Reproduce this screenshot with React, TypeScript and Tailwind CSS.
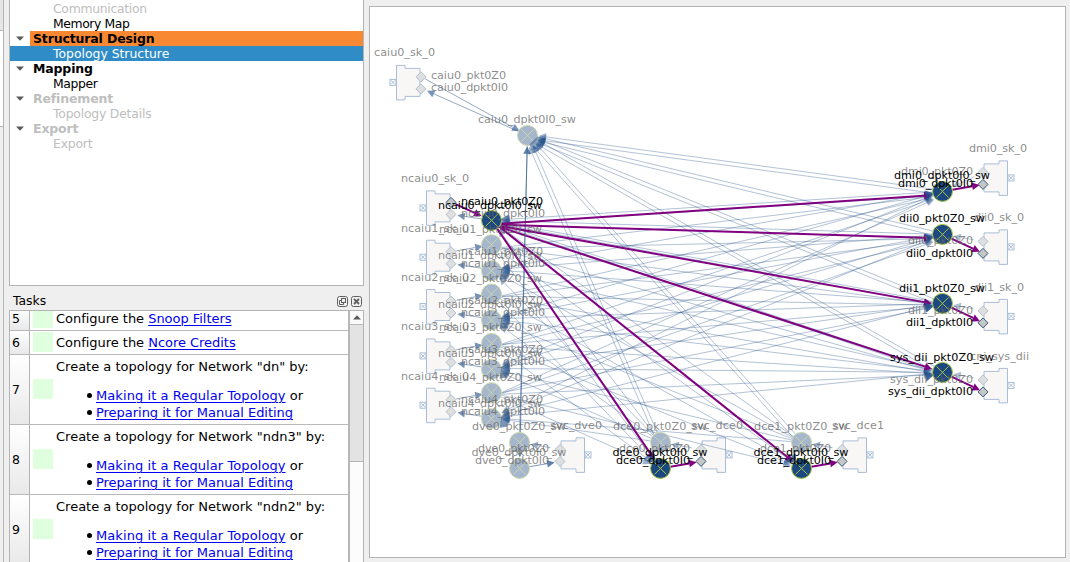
import React from "react";

type TreeItem = { text: string; group?: boolean; tone: string; track?: string };

const tree: TreeItem[] = [
  { text: "Communication", tone: "text-[#bebebe]", track: "tracking-[-0.3px]" },
  { text: "Memory Map", tone: "text-black", track: "tracking-[-0.4px]" },
  { text: "Structural Design", group: true, tone: "text-black bg-[#f98833]" },
  { text: "Topology Structure", tone: "text-white bg-[#308cc6]" },
  { text: "Mapping", group: true, tone: "text-black" },
  { text: "Mapper", tone: "text-black", track: "tracking-[-0.4px]" },
  { text: "Refinement", group: true, tone: "text-[#bebebe]" },
  { text: "Topology Details", tone: "text-[#bebebe]", track: "tracking-[-0.2px]" },
  { text: "Export", group: true, tone: "text-[#bebebe]" },
  { text: "Export", tone: "text-[#bebebe]", track: "tracking-[-0.2px]" },
];

function Tree() {
  return (
    <div className="h-[286px] w-[355px] shrink-0 overflow-hidden border border-t-0 border-[#b4b4b4] bg-white text-[12px]">
      <div className="mt-px flex flex-col">
        {tree.map((t, i) => (
          <div key={i} className={`flex h-[15px] shrink-0 items-center whitespace-pre ${t.group ? "" : t.tone}`}>
            <div className="flex h-[15px] w-5 shrink-0 items-center justify-center">
              {t.group && (
                <svg width="8" height="5" viewBox="0 0 8 5"><path d="M0 .5h8L4 4.8z" fill="#5a5a5a" /></svg>
              )}
            </div>
            <div className={`h-[15px] flex-1 ${t.group ? `pl-[3px] text-[12.5px] font-bold leading-[15px] tracking-[-0.15px] ${t.tone}` : `pl-[23px] text-[12.4px] leading-[15px] ${t.track ?? ""}`}`}>{t.text}</div>
          </div>
        ))}
      </div>
    </div>
  );
}

function Link({ children }: { children: string }) {
  return <span className="text-[#0000f0] underline decoration-1 underline-offset-2">{children}</span>;
}

function RowHead({ n }: { n: number }) {
  return (
    <div className="flex w-5 shrink-0 items-center border-r border-[#b4b4b4] bg-linear-to-b from-white to-[#e9e9e9] pl-[2px] pt-[2px] text-[12.5px]">
      {n}
    </div>
  );
}

function SmallTask({ n, link }: { n: number; link: string }) {
  return (
    <div className="flex h-6 shrink-0 border-b border-[#b9b9b9]">
      <RowHead n={n} />
      <div className="ml-[3px] mt-px h-5 w-5 bg-[#dfffdf]" />
      <div className="ml-[3px] mt-px leading-[21px] tracking-[-0.03px]">Configure the <Link>{link}</Link></div>
    </div>
  );
}

function BigTask({ n, net }: { n: number; net: string }) {
  return (
    <div className="flex h-[70px] shrink-0 border-b border-[#b9b9b9]">
      <RowHead n={n} />
      <div className="ml-[3px] mt-6 h-5 w-5 bg-[#dfffdf]" />
      <div className="ml-[3px] whitespace-pre pt-[3px] leading-[17px]">
        <div>Create a topology for Network "{net}" by:</div>
        <div className="mt-3 flex items-center tracking-[0.08px]">
          <span className="ml-[31px] mr-1 h-[5px] w-[5px] rounded-full bg-black" />
          <span><Link>Making it a Regular Topology</Link> or</span>
        </div>
        <div className="flex items-center tracking-[-0.03px]">
          <span className="ml-[31px] mr-1 h-[5px] w-[5px] rounded-full bg-black" />
          <Link>Preparing it for Manual Editing</Link>
        </div>
      </div>
    </div>
  );
}

function Tasks() {
  return (
    <div className="flex h-[276px] w-[355px] shrink-0 flex-col text-[13px]">
      <div className="flex h-6 shrink-0 items-center pl-1 pr-[2px] pt-[6px]">
        <span className="flex-1 text-[12.4px]">Tasks</span>
        <svg width="25" height="11" viewBox="0 0 25 11" fill="none" stroke="#606060">
          <rect x=".5" y=".5" width="10" height="10" rx="2" />
          <rect x="4.5" y="2.5" width="4" height="4" /><path d="M4 4.500H2.500v4h4V7" />
          <rect x="14.500" y=".5" width="10" height="10" rx="2" />
          <path d="M17 3l5 5M22 3l-5 5" strokeWidth="1.800" />
        </svg>
      </div>
      <div className="flex min-h-0 flex-1 border-l border-t border-[#b4b4b4] bg-white">
        <div className="flex w-[338px] shrink-0 flex-col overflow-hidden">
          <div className="-mt-1 flex flex-col">
            <SmallTask n={5} link="Snoop Filters" />
            <SmallTask n={6} link="Ncore Credits" />
            <BigTask n={7} net="dn" />
            <BigTask n={8} net="ndn3" />
            <BigTask n={9} net="ndn2" />
          </div>
        </div>
        <div className="flex w-4 shrink-0 flex-col border-l-2 border-r border-l-[#b7b7b7] border-r-[#b4b4b4]">
          <div className="flex h-[14px] items-center justify-center border-b border-[#b9b9b9] bg-[#fafafa]">
            <svg width="8" height="5" viewBox="0 0 8 5"><path d="M0 4.500h8L4 .2z" fill="#5a5a5a" /></svg>
          </div>
          <div className="h-[137px] border-b border-[#b4b4b4] bg-[#e3e3e3]" />
          <div className="flex-1 bg-[#fcfcfc]" />
        </div>
      </div>
    </div>
  );
}

type Pt = [number, number];
type Label = [number, number, string, number, boolean?];

const BLUE = "#1f4d87";
const caiu: Pt = [527, 135];
const ncaiuY = [0, 49.3, 98.6, 148, 197.3];
const dests: Pt[] = [[942, 191], [942, 234], [942, 303], [942, 372]];

function Arrow({ a, b, strong, from = 10, to = 11, op = 0.42, shift = 0 }: { a: Pt; b: Pt; strong?: boolean; from?: number; to?: number; op?: number; shift?: number }) {
  const len = Math.hypot(b[0] - a[0], b[1] - a[1]);
  const ux = (b[0] - a[0]) / len;
  const uy = (b[1] - a[1]) / len;
  const ox = -uy * shift;
  const oy = ux * shift;
  const x1 = a[0] + ux * from + ox, y1 = a[1] + uy * from + oy;
  const x2 = b[0] - ux * to + ox, y2 = b[1] - uy * to + oy;
  const bx = x2 - ux * 7.5, by = y2 - uy * 7.5;
  const c = strong ? "#800080" : BLUE;
  return (
    <g opacity={strong ? 1 : op}>
      <line x1={x1} y1={y1} x2={bx} y2={by} stroke={c} strokeWidth={strong ? 2 : 0.8} />
      <polygon points={`${x2},${y2} ${bx - uy * 3.8},${by + ux * 3.8} ${bx + uy * 3.8},${by - ux * 3.8}`} fill={c} />
    </g>
  );
}

function Switch({ p, strong }: { p: Pt; strong?: boolean }) {
  const c = strong ? "#a5c83c" : "#cbd8ab";
  return (
    <g stroke={c} strokeWidth="1">
      <circle cx={p[0]} cy={p[1]} r="10" fill={strong ? "#1d4780" : "#a6b6cc"} />
      <path d={`M${p[0] - 6} ${p[1] - 6}l12 12m0 -12l-12 12`} />
    </g>
  );
}

function Socket({ x, y, flip, hot }: { x: number; y: number; flip?: boolean; hot?: number }) {
  return (
    <g transform={`translate(${x} ${y}) scale(${flip ? -1 : 1} 1)`} stroke="#a9bed8" fill="#f8f7f5">
      <path d="M-24.500 -17.500h8.500v3h15v28h-15v3.500h-8.500z" />
      <rect x="-31" y="-3.500" width="6" height="6" fill="white" />
      <path d="M-30 -2.500l4 4m0 -4l-4 4" />
      {[-6, 6].map((d, i) => (
        <path key={i} d={`M0 ${d - 5}l5 5l-5 5l-5 -5z`} fill={hot === i ? "#c4c8c5" : "#dedfdf"} stroke={hot === i ? "#36587f" : "#b2c0d0"} />
      ))}
    </g>
  );
}

const labels: Label[] = [
  [374, 56, "caiu0_sk_0", 61], [431, 79, "caiu0_pkt0Z0", 75], [431, 91, "caiu0_dpkt0I0", 77], [478, 123, "caiu0_dpkt0I0_sw", 98],
  [969, 152, "dmi0_sk_0", 58], [901, 174.500, "dmi0_pkt0Z0", 72], [894, 179, "dmi0_dpkt0I0_sw", 96, true], [898, 187, "dmi0_dpkt0I0", 75, true],
  [974, 221, "dii0_sk_0", 50], [899, 222, "dii0_pkt0Z0_sw", 86, true], [908, 244, "dii0_pkt0Z0", 65], [906, 256.500, "dii0_dpkt0I0", 67, true],
  [974, 291, "dii1_sk_0", 50], [899, 292, "dii1_pkt0Z0_sw", 86, true], [908, 314, "dii1_pkt0Z0", 65], [906, 326, "dii1_dpkt0I0", 67, true],
  [970, 360, "cni_sys_dii", 59], [890, 361, "sys_dii_pkt0Z0_sw", 104, true], [890, 383, "sys_dii_pkt0Z0", 83], [888, 395, "sys_dii_dpkt0I0", 85, true],
];
ncaiuY.forEach((d, i) => {
  labels.push([401, 182 + d, `ncaiu${i}_sk_0`, 68]);
  if (i) labels.push([439, 183 + d, `ncaiu${i}_pkt0Z0_sw`, 103]);
  labels.push([461, 205 + d, `ncaiu${i}_pkt0Z0`, 82, i === 0], [438, 209 + d, `ncaiu${i}_dpkt0I0_sw`, 104, i === 0], [461, 217 + d, `ncaiu${i}_dpkt0I0`, 84]);
});
["dve0", "dce0", "dce1"].forEach((n, i) => {
  const x = i * 141;
  labels.push([472 + x, 430, `${n}_pkt0Z0_sw`, 94], [550 + x, 429, `svc_${n}`, 52], [478 + x, 452, `${n}_pkt0Z0`, 71],
    [471.500 + x, 456, `${n}_dpkt0I0_sw`, 95, i > 0], [475 + x, 464, `${n}_dpkt0I0`, 74, i > 0]);
});

function Diagram() {
  return (
    <svg width="696" height="550" viewBox="370 7 696 550" fontFamily='"DejaVu Sans", sans-serif' fontSize="11.2">
      <g transform="translate(.5 .4)">
        <g transform="translate(-.5 0)">
          <Socket x={421} y={82.5} />
          {ncaiuY.map((d, i) => <Socket key={i} x={451} y={208 + d} hot={i === 0 ? 0 : undefined} />)}
          {[178, 247, 316.5, 385.5].map((y) => <Socket key={y} x={983} y={y} flip hot={1} />)}
          {[560, 701, 842].map((x, i) => <Socket key={x} x={x} y={455} flip hot={i ? 1 : undefined} />)}
        </g>
        <Arrow a={[421, 76.5]} b={caiu} from={4} to={9} op={0.6} />
        <Arrow a={caiu} b={[421, 88]} to={6} op={0.6} />
        {[...dests, [660, 442] as Pt, [801, 442] as Pt].map((d, i) => (
          <g key={i}>
            <Arrow a={d} b={caiu} shift={-3} />
            <Arrow a={d} b={caiu} shift={1} />
          </g>
        ))}
        <Arrow a={[519, 442]} b={caiu} op={0.7} />
        <Arrow a={caiu} b={[519, 468]} op={0.6} />
        {ncaiuY.map((d, i) => {
          const out: Pt = [491, i ? 195 + d : 220];
          const inp: Pt = [491, 220 + d];
          return (
            <g key={i}>
              {dests.map((t, j) => (
                <g key={j}>
                  <Arrow a={out} b={t} shift={j < 2 ? 4 : 2} />
                  <Arrow a={t} b={inp} />
                </g>
              ))}
              {[660, 801].map((x) => (
                <g key={x}>
                  <Arrow a={out} b={[x, 468]} />
                  <Arrow a={[x, 442]} b={inp} />
                </g>
              ))}
              {i > 0 && <Arrow a={[451, 202 + d]} b={out} from={5} to={9} op={0.6} />}
              <Arrow a={inp} b={[451, 214 + d]} to={6} op={0.6} />
            </g>
          );
        })}
        {dests.map((t, i) => <Arrow key={i} a={[983, [172, 241, 310, 379][i]]} b={t} op={0.35} />)}
        {[519, 660, 801].map((x) => <Arrow key={x} a={[x + 41, 449]} b={[x, 442]} op={0.45} />)}
        <Arrow a={[519, 468]} b={[560, 461]} to={6} op={0.7} />
        <Switch p={caiu} />
        {ncaiuY.slice(1).map((d) => <g key={d}><Switch p={[491, 195 + d]} /><Switch p={[491, 221 + d]} /></g>)}
        {[519, 660, 801].map((x) => <Switch key={x} p={[x, 442]} />)}
        <Switch p={[519, 468]} />
        {ncaiuY.map((d) => (
          <path key={d} d={`M501 ${218 + d}l7 -4l1 9l-3 6l-7 1z`} fill={BLUE} opacity=".6" />
        ))}
        <path d="M537 136l7 2l-2 5l-5 5l-6 2l-2 -6z" fill={BLUE} opacity=".5" />
        {dests.map((t, i) => <Arrow key={i} a={[491, 224]} b={[942, t[1] + [3, 4, 2, 0][i]]} strong />)}
        <Arrow a={[491, 220]} b={[660, 468]} strong />
        <Arrow a={[491, 220]} b={[801, 468]} strong />
        <Arrow a={[451, 202]} b={[491, 220]} strong from={5} />
        {dests.map((t, i) => <Arrow key={i} a={t} b={[983, [184, 253, 322.5, 391.500][i]]} strong to={4} />)}
        <Arrow a={[660, 468]} b={[701, 461]} strong to={5} />
        <Arrow a={[801, 468]} b={[842, 461]} strong to={5} />
        <g fill={BLUE}>
          {dests.map((t) => <path key={t[1]} d={`M${t[0] - 18} ${t[1] - 1}l10 3l-8 7z`} opacity=".85" />)}
          <path d="M646 461l7-8l4 10z M786 461l8-8l3 10z" opacity=".75" />
        </g>
        <Switch p={[491, 220]} strong />
        {dests.map((t) => <Switch key={t[1]} p={t} strong />)}
        <Switch p={[660, 468]} strong />
        <Switch p={[801, 468]} strong />
      </g>
      {labels.map(([x, y, t, w, hot], i) => (
        <text key={i} x={x} y={y + 0.4} textLength={w} fill={hot ? "#000" : "#666"} fillOpacity={hot ? 1 : 0.75}>{t}</text>
      ))}
    </svg>
  );
}

export default function App() {
  return (
    <div className="flex h-[562px] w-[1070px] overflow-hidden bg-[#efefef] font-['DejaVu_Sans',sans-serif] text-black">
      <div className="mr-[5px] flex w-1 shrink-0 flex-col border-r border-[#b4b4b4]">
        <div className="h-[31px] border-b border-[#b4b4b4] bg-[#e6e6e6]" />
        <div className="h-24 border-b border-[#b4b4b4] bg-white" />
      </div>
      <div className="flex w-[355px] shrink-0 flex-col">
        <Tree />
        <Tasks />
      </div>
      <div className="ml-[5px] mt-[6px] h-[552px] w-[697px] shrink-0 overflow-hidden border border-[#b4b4b4] bg-white">
        <Diagram />
      </div>
    </div>
  );
}
